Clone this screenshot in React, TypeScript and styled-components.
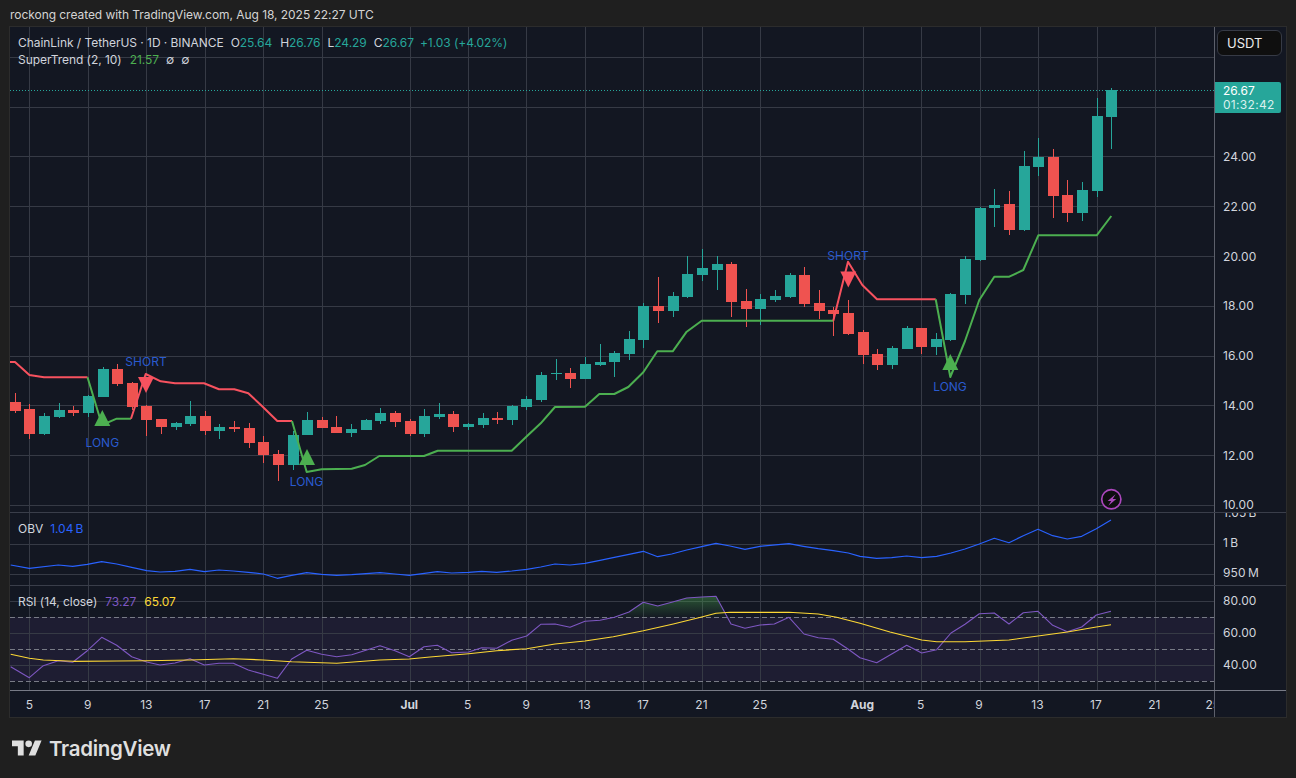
import React from 'react'
import styled, { createGlobalStyle } from 'styled-components'

type Candle = [number, number, number, number, 'g' | 'r']
type Point = [number, number]

const UP = '#26a69a'
const DOWN = '#ef5350'
const GRID = '#363a45'
const TREND_UP = '#4caf50'
const TREND_DOWN = '#f7525f'
const SIGNAL_BLUE = '#2a5bd0'

const DAY_WIDTH = 14.62
const FIRST_TICK_X = 29.4
const dayX = (day: number) => FIRST_TICK_X + day * DAY_WIDTH

const tickDays: { day: number; label: string; bold?: boolean }[] = [
    { day: 0, label: '5' },
    { day: 4, label: '9' },
    { day: 8, label: '13' },
    { day: 12, label: '17' },
    { day: 16, label: '21' },
    { day: 20, label: '25' },
    { day: 26, label: 'Jul', bold: true },
    { day: 30, label: '5' },
    { day: 34, label: '9' },
    { day: 38, label: '13' },
    { day: 42, label: '17' },
    { day: 46, label: '21' },
    { day: 50, label: '25' },
    { day: 57, label: 'Aug', bold: true },
    { day: 61, label: '5' },
    { day: 65, label: '9' },
    { day: 69, label: '13' },
    { day: 73, label: '17' },
    { day: 77, label: '21' },
    { day: 81, label: '25' },
]

// body top, body bottom, wick top, wick bottom (page y), one per day from Jun 4
const candles: Candle[] = [
    [402, 411, 393.3, 412.7, 'r'], [409.3, 433.7, 404.3, 439, 'r'], [416, 433.7, 413.3, 435, 'g'], [410, 417, 403.3, 417.7, 'g'],
    [410, 412.7, 405.7, 415.7, 'r'], [396, 412.7, 395, 416.7, 'g'], [369, 396.7, 367.3, 397.3, 'g'], [369, 384, 364, 385.7, 'r'],
    [383.3, 406.7, 382.3, 410, 'r'], [406, 420, 405, 435.7, 'r'], [419, 426.7, 419, 433.7, 'r'], [423, 426.7, 421.7, 429.7, 'g'],
    [416, 423.7, 401, 425.7, 'g'], [416, 430.7, 411, 434.7, 'r'], [427, 430.7, 424, 438.7, 'g'], [427.3, 428.7, 421, 431.7, 'r'],
    [428, 442.7, 423.3, 447.7, 'r'], [442, 455, 436, 462.7, 'r'], [454, 465, 450, 480.7, 'r'], [435, 465, 431, 470, 'g'],
    [420, 435, 412, 435, 'g'], [420, 427.7, 416.7, 428.3, 'r'], [427, 433, 416, 433, 'r'], [429, 433, 424, 437, 'g'],
    [420, 430, 419, 430, 'g'], [413, 421, 408, 424, 'g'], [413, 422, 411, 427, 'r'],
    [421, 434, 419, 436, 'r'], [416, 434, 409, 437, 'g'], [414, 417, 403, 419, 'g'], [414, 427, 411, 432, 'r'],
    [424, 427, 423, 430, 'g'], [418, 425, 413, 428, 'g'], [418, 420, 412, 424, 'r'], [406, 420, 405, 425, 'g'],
    [399, 407, 396, 410, 'g'], [375, 400, 372, 402, 'g'], [373, 374, 359, 380, 'g'], [373, 379, 368, 388, 'r'],
    [364, 379, 357, 379, 'g'], [362, 365, 344, 366, 'g'], [353, 362, 351, 377, 'g'], [339, 354, 331, 360, 'g'],
    [306, 340, 303.3, 348, 'g'], [306, 311, 277, 323, 'r'], [296, 311, 292, 317, 'g'], [274, 297, 256, 298, 'g'],
    [268, 275, 249, 281, 'g'], [264, 270, 256, 290, 'g'], [264, 302, 262, 317, 'r'], [301, 309, 289, 327, 'r'],
    [299, 309, 294, 325, 'g'], [296, 300, 290, 302, 'g'], [275, 297, 273, 298, 'g'], [275, 304, 267, 307, 'r'],
    [303, 311, 290, 319, 'r'], [310, 314, 307, 336, 'r'], [313, 334, 300, 335, 'r'],
    [332, 355, 330, 364, 'r'], [354, 365, 349, 370, 'r'], [348, 365, 346, 369, 'g'], [328, 349, 326, 349, 'g'],
    [328, 347, 328, 354, 'r'], [339, 347, 333, 355, 'g'], [294, 340, 293, 341, 'g'], [259, 295, 256, 304, 'g'],
    [208, 260, 207, 261, 'g'], [205, 208, 189, 227, 'g'], [204, 230, 191, 235, 'r'], [166, 230, 151, 231, 'g'],
    [157, 167, 138, 176, 'g'], [157, 196, 149, 218, 'r'], [195, 213, 180, 222, 'r'], [190, 213, 182, 221, 'g'],
    [116, 191, 98, 197, 'g'], [90, 117, 88, 149, 'g'],
]

const trendSegments: { color: string; points: Point[] }[] = [
    { color: TREND_DOWN, points: [[10, 362], [15, 362], [29.4, 375], [44, 377.3], [87.5, 377.3]] },
    { color: TREND_UP, points: [[87.5, 377.3], [102, 425], [116.7, 418.7], [131, 418.7]] },
    {
        color: TREND_DOWN,
        points: [[131, 418.7], [145.7, 374], [160.7, 381.3], [175, 383.3], [204, 383.3], [219, 389.3], [234.3, 389.3], [248.3, 393.3], [262.7, 406.7], [277.3, 421], [292, 421]],
    },
    {
        color: TREND_UP,
        points: [[292, 421], [306.7, 472], [321.7, 469.3], [351.7, 468.7], [365, 465], [379.3, 456], [424, 456], [437.7, 450.7], [511.7, 450.7], [526.3, 436.7], [540.7, 423.3], [555, 407], [585, 406.7], [599.3, 394], [614.3, 394], [628.3, 387], [643.3, 372.3], [657.3, 351.3], [672.7, 351.3], [686.7, 331.7], [701.7, 320.7], [833.3, 320.7]],
    },
    { color: TREND_DOWN, points: [[833.3, 320.7], [848, 261.7], [862.3, 285], [877, 299.3], [935.7, 299.3]] },
    {
        color: TREND_UP,
        points: [[935.7, 299.3], [950.3, 377], [965, 341], [979.3, 300], [994.3, 276.7], [1009.3, 276.7], [1023.3, 270], [1038.3, 235.3], [1096.7, 235.3], [1111.3, 216]],
    },
]

const obvLine: Point[] = [
    [10.7, 565], [29.3, 568.3], [58.3, 565], [72.7, 566.3], [87.3, 564.3], [101.7, 561.7], [116.7, 564], [131.7, 567.3], [146.7, 570.7], [160, 572], [175, 571.3], [190, 569.3],
    [204.3, 571.7], [219, 570], [233.3, 571], [248.3, 572.3], [263.3, 574], [277.3, 578.3], [291.7, 575.3], [306.7, 572.7], [321.7, 574.3], [336.7, 575.3], [351.7, 574.7], [380, 572.7],
    [395, 574], [409.3, 575.3], [430, 572.7], [437.3, 571.7], [451.7, 573], [468.7, 572.3], [481.7, 571.3], [496.7, 572.3], [511.7, 571], [526.7, 569.3], [540.7, 567], [555, 564],
    [570, 565], [585, 563.3], [600, 560.3], [614.3, 557.3], [629, 554.3], [643.3, 551.3], [657.7, 556.7], [671.7, 554], [686.7, 550], [701.7, 546.7], [716, 543.3], [730, 546], [745, 549.3],
    [760, 546.3], [789, 543.7], [803.3, 546.3], [818.3, 548.7], [833.3, 550.7], [848.3, 553], [860, 556.3], [876.7, 558.3], [891.7, 557.7], [906.7, 556], [921.7, 557.7], [936.7, 556.3],
    [951, 553], [965, 549], [979.3, 544], [994.3, 538.3], [1009, 542.7], [1023.3, 535.7], [1038, 529.3], [1052.7, 535.7], [1067.3, 539], [1081.7, 536.3], [1096.3, 528.7], [1111, 520],
]

const rsiLine: Point[] = [
    [10.7, 666.7], [29.3, 677.7], [43.3, 665.7], [58.3, 660.7], [72.7, 662.3], [87.3, 650.7], [101.7, 637.3], [116.7, 645.3], [131.7, 656.7], [146.7, 662], [160, 665], [175, 663],
    [190, 658.7], [204.3, 665], [219, 663.3], [233.3, 663.3], [248.3, 670], [263.3, 674.3], [277.3, 678.3], [291.7, 659], [306.7, 650.3], [321.7, 654.3], [336.7, 656.7], [351.7, 654.7],
    [366.7, 650], [380, 645.7], [395, 650.7], [409.3, 656.7], [424, 646.7], [437.3, 645.3], [451.7, 652.7], [468.7, 652], [481.7, 647.7], [496.7, 648.3], [511.7, 640.3], [526.7, 636],
    [540.7, 624.3], [555, 624], [570, 627.3], [585, 621.3], [600, 620.3], [614.3, 617.3], [629, 612], [643.3, 602.3], [657.7, 606], [671.7, 602.3], [686.7, 598], [701.7, 597], [716, 596.3],
    [731, 624], [745, 628.3], [760, 625], [774.3, 624], [789, 617.3], [804, 634], [818.3, 637.7], [833.3, 639.3], [848.3, 649.3], [860, 657.7], [876.7, 662.7], [891.7, 654], [906.7, 645.3],
    [921.7, 653], [936.7, 649.7], [951, 633], [965, 624.3], [979.3, 613.7], [994.3, 613], [1009, 624], [1023.3, 612.7], [1038, 611.3], [1052.7, 625.3], [1067.3, 631.7], [1081.7, 627], [1096.3, 615], [1111, 611.3],
]

const rsiAverage: Point[] = [
    [10.7, 654.3], [29.3, 658.3], [43.3, 660], [73.3, 661.3], [116.7, 661], [146.7, 660.7], [190, 660], [233.3, 658.7], [263.3, 660], [291.7, 661.7], [336.7, 663.3], [380, 660],
    [409.3, 659], [430, 657], [468.7, 653.7], [496.7, 650.7], [526.7, 648.7], [555, 644], [585, 641], [613.3, 636.7], [643.3, 630.7], [673.3, 624], [701.7, 617], [716, 613.3], [730, 612.3],
    [789, 612.3], [818.3, 614], [836.7, 617.3], [860, 623.3], [890, 632], [921.7, 640], [936.7, 641.7], [965, 641.7], [1009, 640], [1038, 636], [1067.3, 632], [1096.3, 627], [1111, 624.7],
]

const toPath = (points: Point[]) => points.map(([x, y], i) => `${i ? 'L' : 'M'}${x} ${y}`).join(' ')

const GlobalStyle = createGlobalStyle`
    html, body {
        margin: 0;
        background: #1f1f1f;
        font-family: Inter, "Liberation Sans", sans-serif;
    }
`

const Page = styled.div`
    width: 1296px;
    height: 778px;
    overflow: hidden;
    display: flex;
    flex-direction: column;
`

const Caption = styled.div`
    height: 26px;
    padding-left: 10px;
    font-size: 12px;
    line-height: 30px;
    letter-spacing: -0.05px;
    color: #d4d4d4;
`

const ChartFrame = styled.div`
    width: 1276px;
    margin-left: 9px;
    border: 1px solid #2c2c2c;
    background: #131722;
    display: flex;
    flex-direction: column;
`

const PaneRow = styled.div<{ $height: number; $line?: string }>`
    height: ${p => p.$height}px;
    display: flex;
    flex: none;
    border-bottom: 1px solid ${p => p.$line ?? '#3a3e4a'};
`

const PaneCanvas = styled.div`
    width: 1204px;
    flex: none;
    position: relative;
    overflow: hidden;
`

const ChartSvg = styled.svg`
    display: block;
`

const PriceScale = styled.div`
    flex: 1;
    position: relative;
    overflow: hidden;
    border-left: 1px solid #5d606b;
`

const PriceTicks = styled.div<{ $top: number; $step: number }>`
    margin-top: ${p => p.$top - p.$step / 2}px;
    display: grid;
    grid-auto-rows: ${p => p.$step}px;
`

const PriceTick = styled.div`
    display: flex;
    align-items: center;
    padding-left: 8px;
    font-size: 12px;
    color: #d1d4dc;
    letter-spacing: 0.1px;
`

const CurrencyButton = styled.div`
    position: absolute;
    top: 3px;
    left: 2px;
    width: 65px;
    height: 26px;
    box-sizing: border-box;
    padding-left: 9px;
    display: flex;
    align-items: center;
    background: #0f0f0f;
    border: 1px solid #363a45;
    border-radius: 6px;
    font-size: 13px;
    color: #ececec;
`

const LastPrice = styled.div`
    position: absolute;
    top: 55px;
    left: 0;
    width: 66px;
    height: 31px;
    box-sizing: border-box;
    padding: 2px 0 0 8px;
    background: ${UP};
    border-radius: 0 2px 2px 0;
    font-size: 12px;
    line-height: 14px;
    color: #ffffff;
`

const Countdown = styled.div`
    color: #d9f0ee;
    letter-spacing: 0.3px;
`

const Legend = styled.div<{ $top: number }>`
    position: absolute;
    top: ${p => p.$top}px;
    left: 8px;
    display: flex;
    flex-direction: column;
`

const LegendRow = styled.div`
    display: flex;
    height: 17px;
    align-items: center;
    font-size: 12px;
    letter-spacing: -0.05px;
    color: #d1d4dc;
    white-space: nowrap;
`

const LegendValue = styled.span<{ $color: string; $gap?: number }>`
    color: ${p => p.$color};
    margin-left: ${p => p.$gap ?? 0}px;
`

const TimeAxis = styled.div`
    height: 26px;
    display: flex;
`

const TimeTicks = styled.div`
    width: 1204px;
    flex: none;
    box-sizing: border-box;
    padding-left: 12.1px;
    overflow: hidden;
    display: grid;
    grid-template-columns: repeat(82, ${DAY_WIDTH}px);
    align-items: center;
`

const TimeTick = styled.div<{ $day: number; $bold?: boolean }>`
    grid-row: 1;
    grid-column: ${p => p.$day + 1};
    justify-self: center;
    font-size: 12px;
    font-weight: ${p => (p.$bold ? 700 : 400)};
    color: #d1d4dc;
    white-space: nowrap;
`

const TimeCorner = styled.div`
    flex: 1;
    border-left: 1px solid #5d606b;
`

const Footer = styled.div`
    flex: 1;
    display: flex;
    align-items: center;
    gap: 7px;
    padding: 0 0 0 12px;
    color: #dfdfdf;
`

const Wordmark = styled.span`
    font-size: 20.5px;
    font-weight: 600;
    letter-spacing: -0.3px;
`

const SignalLabel = styled.text`
    font-size: 12px;
    fill: ${SIGNAL_BLUE};
    text-anchor: middle;
    dominant-baseline: central;
`

const GridLine = styled.path`
    stroke: ${GRID};
    stroke-width: 1;
    fill: none;
    shape-rendering: crispEdges;
`

const PlotLine = styled.path<{ $color: string; $width?: number }>`
    stroke: ${p => p.$color};
    stroke-width: ${p => p.$width ?? 1};
    stroke-linejoin: round;
    fill: none;
`

const BandLine = styled.path`
    stroke: #787b86;
    stroke-width: 1;
    stroke-dasharray: 5 3;
    fill: none;
    shape-rendering: crispEdges;
`

// one svg per pane, viewBox in page coordinates so data stays in reference pixels
const paneBox = (top: number, height: number) => `10 ${top} 1204 ${height}`

const VerticalGrid: React.FC<{ top: number; bottom: number }> = ({ top, bottom }) => (
    <GridLine d={tickDays.map(t => `M${Math.round(dayX(t.day)) + 0.5} ${top}V${bottom}`).join(' ')} />
)

const HorizontalGrid: React.FC<{ ys: number[] }> = ({ ys }) => (
    <GridLine d={ys.map(y => `M10 ${Math.floor(y) + 0.5}H1214`).join(' ')} />
)

const CandleMark: React.FC<{ day: number; candle: Candle }> = ({ day, candle }) => {
    const [top, bottom, wickTop, wickBottom, side] = candle
    const x = Math.round(dayX(day))
    const color = side === 'g' ? UP : DOWN
    return (
        <g fill={color} shapeRendering="crispEdges">
            <rect x={x} y={wickTop} width={1} height={wickBottom - wickTop} />
            <rect x={x - 5} y={top} width={11} height={Math.max(bottom - top, 1)} />
        </g>
    )
}

const UpArrow: React.FC<{ x: number; top: number }> = ({ x, top }) => (
    <path d={`M${x} ${top}L${x + 8} ${top + 16}H${x - 8}Z`} fill={TREND_UP} />
)

const DownArrow: React.FC<{ x: number; tip: number }> = ({ x, tip }) => (
    <path d={`M${x} ${tip}L${x + 8} ${tip - 16}H${x - 8}Z`} fill={TREND_DOWN} />
)

const MainPane: React.FC = () => (
    <ChartSvg width={1204} height={485} viewBox={paneBox(27, 485)}>
        <HorizontalGrid ys={[57, 107, 156.5, 206.5, 256.5, 306, 356, 405.5, 455, 505]} />
        <VerticalGrid top={27} bottom={512} />
        {candles.map((c, i) => (
            <CandleMark key={i} day={i - 1} candle={c} />
        ))}
        {trendSegments.map((s, i) => (
            <PlotLine key={i} d={toPath(s.points)} $color={s.color} $width={2} />
        ))}
        <UpArrow x={102.3} top={410} />
        <UpArrow x={307} top={449} />
        <UpArrow x={950.3} top={354} />
        <DownArrow x={146} tip={393} />
        <DownArrow x={848.3} tip={287.5} />
        <SignalLabel x={102.3} y={442}>LONG</SignalLabel>
        <SignalLabel x={146} y={361}>SHORT</SignalLabel>
        <SignalLabel x={306.5} y={481}>LONG</SignalLabel>
        <SignalLabel x={848} y={255}>SHORT</SignalLabel>
        <SignalLabel x={950} y={386}>LONG</SignalLabel>
        <GridLine d="M10 90.5H1214" strokeDasharray="1 2" style={{ stroke: UP }} />
        <circle cx={1111.3} cy={499.3} r={9.6} fill="#0e0e10" stroke="#ab47bc" strokeWidth={1.7} />
        <path d="M1115.6 494.2l-8 6.8h3.6l-2.9 4.7 8-6.8h-3.6z" fill="#ab47bc" />
    </ChartSvg>
)

const ObvPane: React.FC = () => (
    <ChartSvg width={1204} height={72} viewBox={paneBox(513, 72)}>
        <HorizontalGrid ys={[544, 574]} />
        <VerticalGrid top={513} bottom={585} />
        <PlotLine d={toPath(obvLine)} $color="#2962ff" $width={1.2} />
    </ChartSvg>
)

const RsiPane: React.FC = () => (
    <ChartSvg width={1204} height={104} viewBox={paneBox(586, 104)}>
        <defs>
            <linearGradient id="overbought" gradientUnits="userSpaceOnUse" x1="0" y1="597" x2="0" y2="617">
                <stop offset="0" stopColor="#4caf50" stopOpacity={0.4} />
                <stop offset="1" stopColor="#4caf50" stopOpacity={0.02} />
            </linearGradient>
            <clipPath id="aboveBand">
                <rect x={10} y={586} width={1204} height={31.5} />
            </clipPath>
        </defs>
        <rect x={10} y={617} width={1204} height={64} fill="#7e57c2" fillOpacity={0.1} />
        <HorizontalGrid ys={[601, 633, 665]} />
        <VerticalGrid top={586} bottom={690} />
        <BandLine d="M10 617.5H1214M10 649.5H1214M10 681.5H1214" />
        <path d={`${toPath(rsiLine)}V640H10Z`} fill="url(#overbought)" clipPath="url(#aboveBand)" />
        <PlotLine d={toPath(rsiLine)} $color="#7e57c2" $width={1.1} />
        <PlotLine d={toPath(rsiAverage)} $color="#fdd835" $width={1.15} />
    </ChartSvg>
)

const TradingViewLogo: React.FC = () => (
    <svg width={30} height={16} viewBox="0 3.5 36 19" fill="currentColor">
        <path d="M14 22H7V11H0V4h14v18zM28 22h-8l7.5-18h8L28 22z" />
        <circle cx={20} cy={8} r={4} />
    </svg>
)

const App: React.FC = () => (
    <Page>
        <GlobalStyle />
        <Caption>rockong created with TradingView.com, Aug 18, 2025 22:27 UTC</Caption>
        <ChartFrame>
            <PaneRow $height={485}>
                <PaneCanvas>
                    <MainPane />
                    <Legend $top={7}>
                        <LegendRow>
                            ChainLink / TetherUS · 1D · BINANCE
                            <LegendValue $color="#d1d4dc" $gap={7}>O</LegendValue>
                            <LegendValue $color={UP}>25.64</LegendValue>
                            <LegendValue $color="#d1d4dc" $gap={8}>H</LegendValue>
                            <LegendValue $color={UP}>26.76</LegendValue>
                            <LegendValue $color="#d1d4dc" $gap={7}>L</LegendValue>
                            <LegendValue $color={UP}>24.29</LegendValue>
                            <LegendValue $color="#d1d4dc" $gap={7}>C</LegendValue>
                            <LegendValue $color={UP}>26.67</LegendValue>
                            <LegendValue $color={UP} $gap={6}>+1.03 (+4.02%)</LegendValue>
                        </LegendRow>
                        <LegendRow>
                            SuperTrend (2, 10)
                            <LegendValue $color={TREND_UP} $gap={8}>21.57</LegendValue>
                            <LegendValue $color="#d1d4dc" $gap={7}>∅</LegendValue>
                            <LegendValue $color="#d1d4dc" $gap={7}>∅</LegendValue>
                        </LegendRow>
                    </Legend>
                </PaneCanvas>
                <PriceScale>
                    <PriceTicks $top={129.5} $step={49.75}>
                        {['24.00', '22.00', '20.00', '18.00', '16.00', '14.00', '12.00', '10.00'].map(t => (
                            <PriceTick key={t}>{t}</PriceTick>
                        ))}
                    </PriceTicks>
                    <CurrencyButton>USDT</CurrencyButton>
                    <LastPrice>
                        26.67
                        <Countdown>01:32:42</Countdown>
                    </LastPrice>
                </PriceScale>
            </PaneRow>
            <PaneRow $height={72}>
                <PaneCanvas>
                    <ObvPane />
                    <Legend $top={7}>
                        <LegendRow>
                            OBV
                            <LegendValue $color="#2962ff" $gap={7}>1.04{'\u2009'}B</LegendValue>
                        </LegendRow>
                    </Legend>
                </PaneCanvas>
                <PriceScale>
                    <PriceTicks $top={-0.5} $step={30}>
                        {['1.05\u2009B', '1\u2009B', '950\u2009M'].map(t => (
                            <PriceTick key={t}>{t}</PriceTick>
                        ))}
                    </PriceTicks>
                </PriceScale>
            </PaneRow>
            <PaneRow $height={104} $line="#787b86">
                <PaneCanvas>
                    <RsiPane />
                    <Legend $top={7}>
                        <LegendRow>
                            RSI (14, close)
                            <LegendValue $color="#7e57c2" $gap={8}>73.27</LegendValue>
                            <LegendValue $color="#fdd835" $gap={8}>65.07</LegendValue>
                        </LegendRow>
                    </Legend>
                </PaneCanvas>
                <PriceScale>
                    <PriceTicks $top={14} $step={32}>
                        {['80.00', '60.00', '40.00'].map(t => (
                            <PriceTick key={t}>{t}</PriceTick>
                        ))}
                    </PriceTicks>
                </PriceScale>
            </PaneRow>
            <TimeAxis>
                <TimeTicks>
                    {tickDays.map(t => (
                        <TimeTick key={t.day} $day={t.day} $bold={t.bold}>
                            {t.label}
                        </TimeTick>
                    ))}
                </TimeTicks>
                <TimeCorner />
            </TimeAxis>
        </ChartFrame>
        <Footer>
            <TradingViewLogo />
            <Wordmark>TradingView</Wordmark>
        </Footer>
    </Page>
)

export default App
